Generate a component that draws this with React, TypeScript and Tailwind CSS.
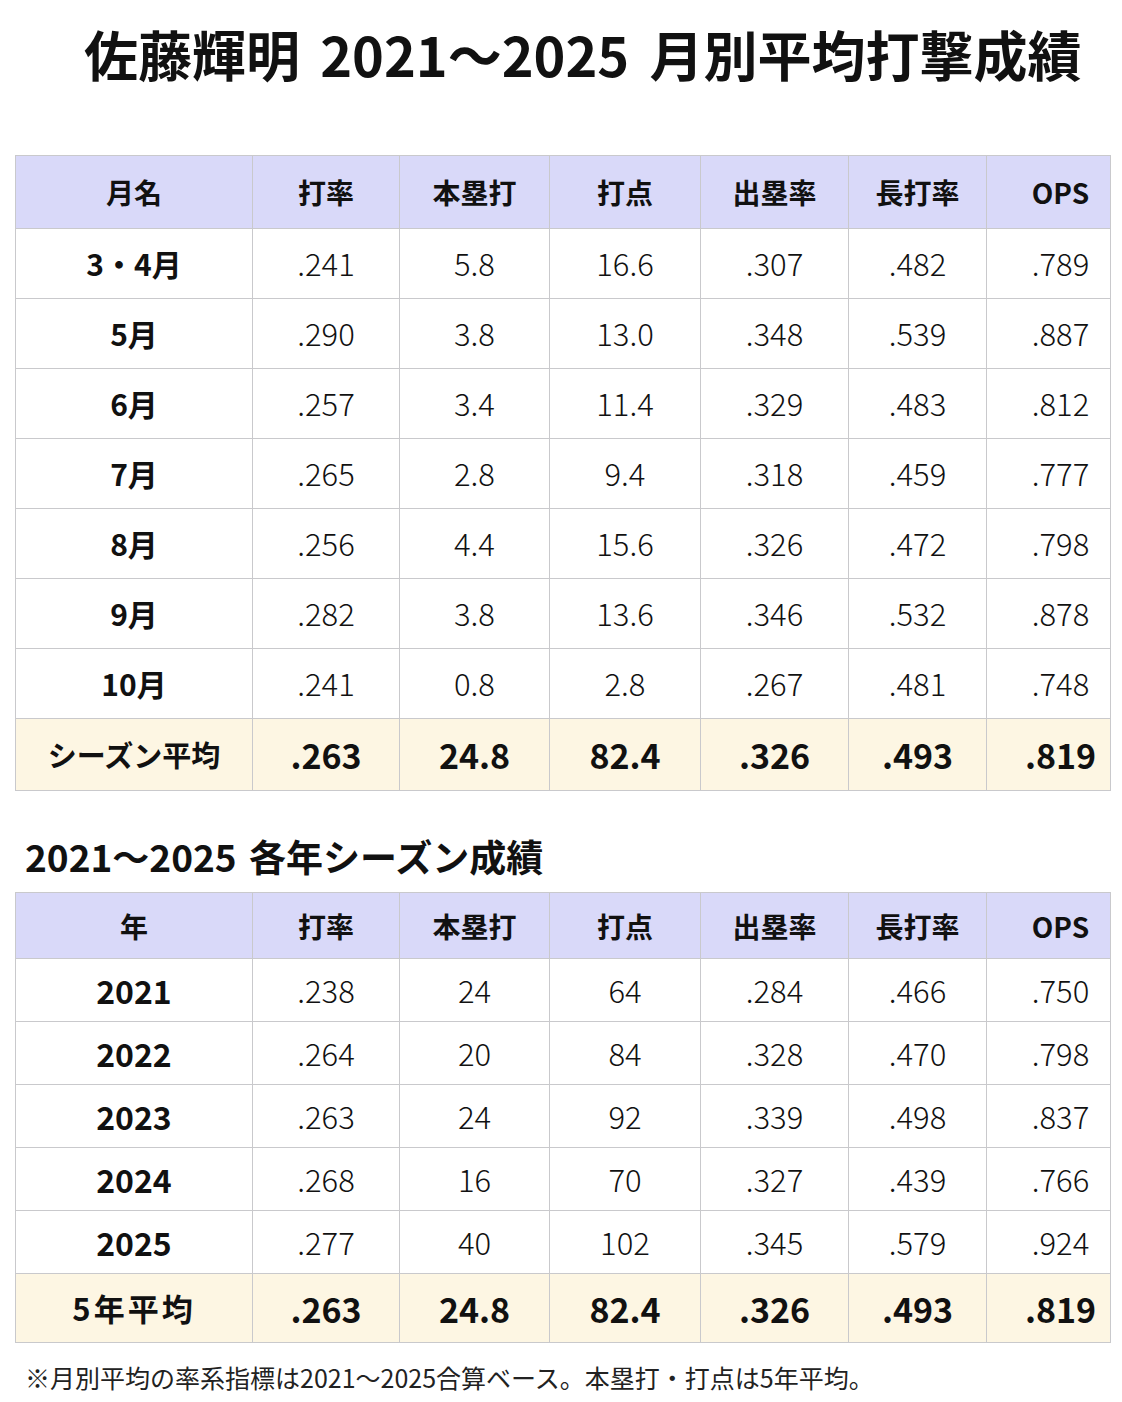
import React from 'react'

const font = { fontFamily: '"Noto Sans CJK JP", "Noto Sans", sans-serif' }

const headers = ['打率', '本塁打', '打点', '出塁率', '長打率', 'OPS']

const monthly = [
    ['3・4月', '.241', '5.8', '16.6', '.307', '.482', '.789'],
    ['5月', '.290', '3.8', '13.0', '.348', '.539', '.887'],
    ['6月', '.257', '3.4', '11.4', '.329', '.483', '.812'],
    ['7月', '.265', '2.8', '9.4', '.318', '.459', '.777'],
    ['8月', '.256', '4.4', '15.6', '.326', '.472', '.798'],
    ['9月', '.282', '3.8', '13.6', '.346', '.532', '.878'],
    ['10月', '.241', '0.8', '2.8', '.267', '.481', '.748'],
]

const yearly = [
    ['2021', '.238', '24', '64', '.284', '.466', '.750'],
    ['2022', '.264', '20', '84', '.328', '.470', '.798'],
    ['2023', '.263', '24', '92', '.339', '.498', '.837'],
    ['2024', '.268', '16', '70', '.327', '.439', '.766'],
    ['2025', '.277', '40', '102', '.345', '.579', '.924'],
]

const average = ['.263', '24.8', '82.4', '.326', '.493', '.819']

function Cols() {
    return (
        <colgroup>
            <col className="w-[237px]" />
            <col className="w-[147px]" />
            <col className="w-[150px]" />
            <col className="w-[151px]" />
            <col className="w-[148px]" />
            <col className="w-[138px]" />
            <col className="w-[124px]" />
        </colgroup>
    )
}

function StatsTable({ label, rows, avgLabel, headH, rowH, avgH, rowLabelSize, avgLabelClass }: {
    label: string
    rows: string[][]
    avgLabel: string
    headH: string
    rowH: string
    avgH: string
    rowLabelSize: string
    avgLabelClass: string
}) {
    const cell = 'border border-[#c9c9cc] text-center p-0'
    return (
        <table className="w-[1095px] table-fixed border-collapse text-[#111]">
            <Cols />
            <thead>
                <tr className={`bg-[#d9d9f9] ${headH}`}>
                    <th className={`${cell} text-[28px] font-bold`}>{label}</th>
                    {headers.map((h, i) => (
                        <th key={h} className={`${cell} text-[28px] font-bold ${i === 5 ? 'pl-[24px]' : ''}`}>{h}</th>
                    ))}
                </tr>
            </thead>
            <tbody>
                {rows.map((r) => (
                    <tr key={r[0]} className={`bg-white ${rowH}`}>
                        <td className={`${cell} ${rowLabelSize} font-bold`}>{r[0]}</td>
                        {r.slice(1).map((v, i) => (
                            <td key={i} className={`${cell} text-[31px] font-light ${i === 5 ? 'pl-[24px]' : ''}`}>{v}</td>
                        ))}
                    </tr>
                ))}
                <tr className={`bg-[#fdf6e3] ${avgH}`}>
                    <td className={`${cell} ${avgLabelClass} font-bold`}>{avgLabel}</td>
                    {average.map((v, i) => (
                        <td key={i} className={`${cell} text-[34px] font-bold ${i === 5 ? 'pl-[24px]' : ''}`}>{v}</td>
                    ))}
                </tr>
            </tbody>
        </table>
    )
}

export default function App() {
    return (
        <div className="w-[1122px] h-[1402px] bg-white px-[15px] pt-[20px] overflow-hidden" style={font}>
            {/* main title */}
            <h1 className="pl-[69px] text-[54px] leading-[67px] font-bold text-[#111] whitespace-nowrap [word-spacing:8px]">
                佐藤輝明 2021〜2025 月別平均打撃成績
            </h1>

            <div className="mt-[68px]">
                <StatsTable
                    label="月名"
                    rows={monthly}
                    avgLabel="シーズン平均"
                    headH="h-[73px]"
                    rowH="h-[70px]"
                    avgH="h-[72px]"
                    rowLabelSize="text-[30px]"
                    avgLabelClass="text-[29px]"
                />
            </div>

            <h2 className="mt-[43px] pl-[10px] text-[37px] leading-[45px] font-bold text-[#111] [word-spacing:4px]">
                2021〜2025 各年シーズン成績
            </h2>

            <div className="mt-[13px]">
                <StatsTable
                    label="年"
                    rows={yearly}
                    avgLabel="5年平均"
                    headH="h-[66px]"
                    rowH="h-[63px]"
                    avgH="h-[69px]"
                    rowLabelSize="text-[32px]"
                    avgLabelClass="text-[31px] tracking-[3px]"
                />
            </div>

            <p className="mt-[18px] pl-[10px] text-[25px] leading-[32px] text-[#222]">
                ※月別平均の率系指標は2021〜2025合算ベース。本塁打・打点は5年平均。
            </p>
        </div>
    )
}
